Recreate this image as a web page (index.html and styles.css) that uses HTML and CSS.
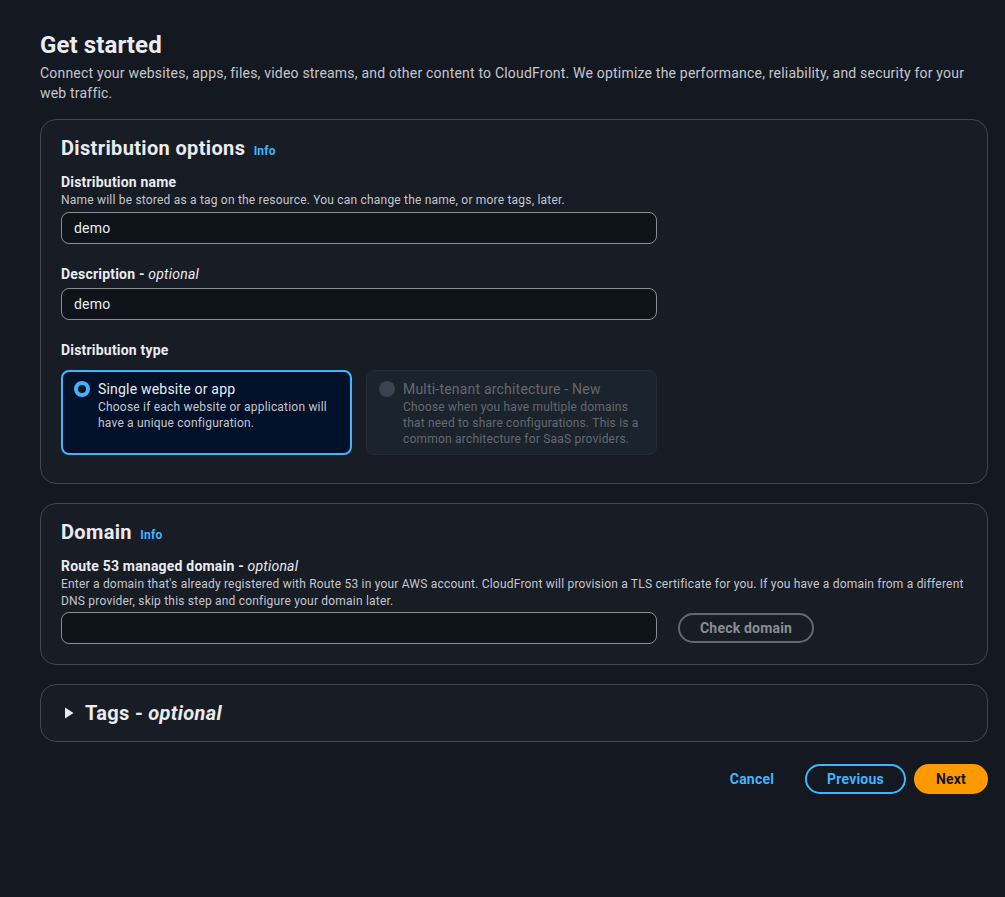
FILE: index.html
```html
<!DOCTYPE html>
<html lang="en">
<head>
  <meta charset="UTF-8">
  <meta name="viewport" content="width=device-width, initial-scale=1.0">
  <title>Get started - CloudFront</title>
  <link rel="stylesheet" href="styles.css">
</head>
<body>
  <main class="page">
    <h1 class="page-title">Get started</h1>
    <p class="page-desc">Connect your websites, apps, files, video streams, and other content to CloudFront. We optimize the performance, reliability, and security for your web traffic.</p>

    <section class="panel">
      <h2 class="panel-title">Distribution options <a class="info" href="#">Info</a></h2>

      <div class="field">
        <label class="field-label" for="distName">Distribution name</label>
        <div class="field-hint">Name will be stored as a tag on the resource. You can change the name, or more tags, later.</div>
        <input class="text-input" type="text" id="distName" value="demo">
      </div>

      <div class="field">
        <label class="field-label" for="distDesc">Description - <em>optional</em></label>
        <input class="text-input" type="text" id="distDesc" value="demo">
      </div>

      <div class="field">
        <div class="field-label">Distribution type</div>
        <div class="tiles">
          <label class="tile tile-selected">
            <span class="radio radio-on"></span>
            <span class="tile-body">
              <span class="tile-title">Single website or app</span>
              <span class="tile-text">Choose if each website or application will have a unique configuration.</span>
            </span>
          </label>
          <label class="tile tile-disabled">
            <span class="radio radio-off"></span>
            <span class="tile-body">
              <span class="tile-title">Multi-tenant architecture - New</span>
              <span class="tile-text">Choose when you have multiple domains that need to share configurations. This is a common architecture for SaaS providers.</span>
            </span>
          </label>
        </div>
      </div>
    </section>

    <section class="panel panel-domain">
      <h2 class="panel-title">Domain <a class="info" href="#">Info</a></h2>
      <div class="field field-domain">
        <label class="field-label" for="domain">Route 53 managed domain - <em>optional</em></label>
        <div class="field-hint">Enter a domain that's already registered with Route 53 in your AWS account. CloudFront will provision a TLS certificate for you. If you have a domain from a different DNS provider, skip this step and configure your domain later.</div>
        <div class="domain-row">
          <input class="text-input" type="text" id="domain">
          <button class="btn btn-disabled" type="button">Check domain</button>
        </div>
      </div>
    </section>

    <section class="panel panel-collapsed">
      <h2 class="panel-title expand">
        <svg class="caret" width="10" height="12" viewBox="0 0 10 12"><path d="M1 0.5 L9.5 6 L1 11.5 Z" fill="#ebebf0"/></svg>
        Tags - <em>optional</em>
      </h2>
    </section>

    <div class="actions">
      <button class="btn btn-link" type="button">Cancel</button>
      <button class="btn btn-normal" type="button">Previous</button>
      <button class="btn btn-primary" type="button">Next</button>
    </div>
  </main>
</body>
</html>
```

FILE: styles.css
```css
body {
  margin: 0;
  background-color: #141921;
  color: #dedee3;
  font-family: Roboto, "Noto Sans", sans-serif;
  font-size: 14px;
  line-height: 20px;
  letter-spacing: 0.2px;
}
.page {
  width: 948px;
  padding: 30px 17px 40px 40px;
}
.page-title {
  margin: 0;
  font-size: 24px;
  line-height: 30px;
  font-weight: 700;
  color: #ebebf0;
  letter-spacing: 0.1px;
}
.page-desc {
  margin: 3px 0 0;
  color: #c6c6cd;
}
.panel {
  margin-top: 16px;
  background-color: #171c25;
  border: 1px solid #424650;
  border-radius: 16px;
  padding: 16px 20px 28px;
}
.panel + .panel {
  margin-top: 19px;
}
.panel-title {
  margin: 0;
  font-size: 20px;
  line-height: 24px;
  font-weight: 700;
  color: #ebebf0;
  letter-spacing: 0.35px;
}
.info {
  font-size: 12px;
  font-weight: 700;
  color: #42b4ff;
  text-decoration: none;
  margin-left: 3px;
  letter-spacing: 0.2px;
}
.field {
  margin-top: 20px;
  width: 596px;
}
.panel-title + .field {
  margin-top: 9px;
}
.field-label {
  display: block;
  font-weight: 700;
  color: #ebebf0;
}
.field-label em {
  font-weight: 400;
}
.field-hint {
  font-size: 12px;
  line-height: 17px;
  color: #c6c6cd;
}
.text-input {
  display: block;
  box-sizing: border-box;
  width: 596px;
  height: 32px;
  margin-top: 4px;
  padding: 4px 12px;
  background-color: #0f141a;
  border: 1px solid #8c8c94;
  border-radius: 8px;
  color: #ebebf0;
  font-family: inherit;
  font-size: 14px;
  letter-spacing: 0.2px;
}
.field-hint + .text-input {
  margin-top: 3px;
}
.tiles {
  display: grid;
  grid-template-columns: 1fr 1fr;
  gap: 14px;
  margin-top: 10px;
}
.tile {
  display: flex;
  gap: 8px;
  height: 85px;
  box-sizing: border-box;
  padding: 8px 12px;
  border-radius: 8px;
  border: 1px solid #232b37;
}
.tile-selected {
  background-color: #001129;
  border: 2px solid #42b4ff;
  padding: 7px 11px;
}
.tile-disabled {
  background-color: #1b232d;
  border-color: #232b37;
}
.radio {
  flex: none;
  width: 16px;
  height: 16px;
  margin-top: 2px;
  border-radius: 50%;
  box-sizing: border-box;
}
.radio-on {
  border: 4px solid #42b4ff;
  background-color: #0f141a;
}
.radio-off {
  background-color: #3c4350;
}
.tile-body {
  display: flex;
  flex-direction: column;
}
.tile-title {
  color: #ebebf0;
}
.tile-text {
  font-size: 12px;
  line-height: 16px;
  color: #c6c6cd;
}
.tile-disabled .tile-title {
  color: #656871;
}
.tile-disabled .tile-text {
  color: #656871;
}
.panel-domain {
  padding-bottom: 20px;
}
.field-domain {
  width: auto;
  margin-top: 8px;
}
.domain-row {
  display: flex;
  align-items: center;
  gap: 21px;
}
.domain-row .text-input {
  margin-top: 2px;
}
.btn {
  font-family: inherit;
  font-size: 14px;
  font-weight: 700;
  line-height: 20px;
  letter-spacing: 0.2px;
  border-radius: 20px;
  padding: 3px 20px;
  cursor: pointer;
  background: none;
}
.btn-disabled {
  border: 2px solid #656871;
  color: #8c8c94;
  margin-top: 2px;
}
.panel-collapsed {
  padding: 16px 20px 16px;
}
.expand {
  display: flex;
  align-items: center;
  gap: 11px;
}
.expand em {
  margin-left: -6px;
}
.caret {
  margin-left: 3px;
}
.actions {
  display: flex;
  justify-content: flex-end;
  align-items: center;
  gap: 8px;
  margin-top: 22px;
}
.btn-link {
  border: 2px solid transparent;
  color: #42b4ff;
  margin-right: 1px;
}
.btn-normal {
  border: 2px solid #42b4ff;
  color: #42b4ff;
}
.btn-primary {
  border: 2px solid #ff9900;
  background-color: #ff9900;
  color: #0f141a;
}
```
